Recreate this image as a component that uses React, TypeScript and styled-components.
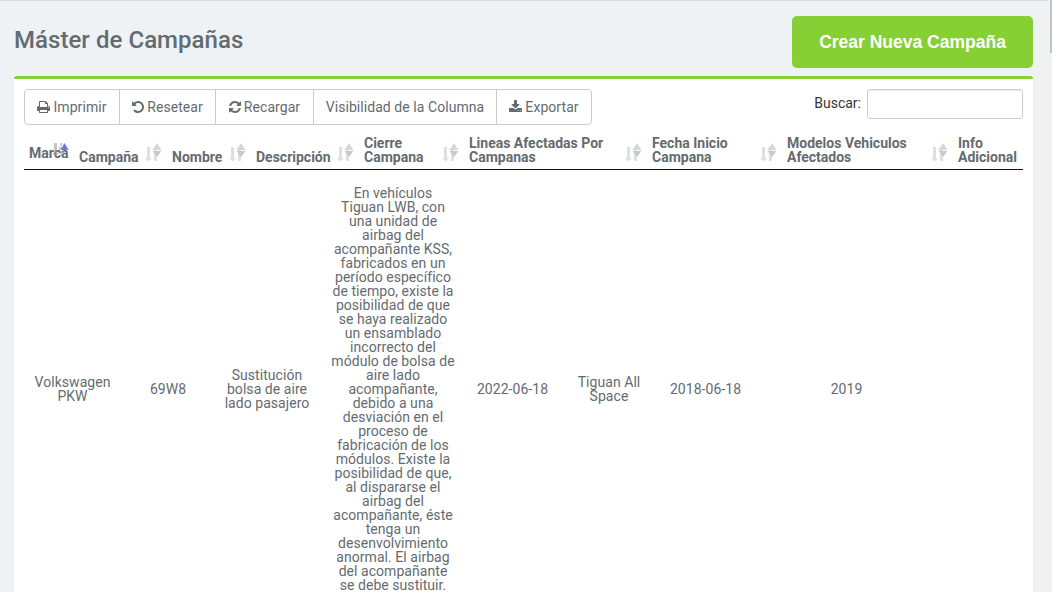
import React from 'react';
import styled, { createGlobalStyle } from 'styled-components';

const GlobalStyle = createGlobalStyle`
  * { box-sizing: border-box; }
  body {
    margin: 0;
    background: #eef2f5;
    color: #646b70;
    font: 14px/14px Roboto, sans-serif;
    letter-spacing: 0.05px;
    overflow: hidden;
  }
`;

const Page = styled.div`
  display: flex;
  height: 592px;
  overflow: hidden;
`;
const Main = styled.main`
  flex: 1;
  min-width: 0;
  padding: 15px 15px 0 14px;
  border-top: 1px solid #d5dde4;
`;
const Scrollbar = styled.div`
  width: 4px;
  padding-left: 2px;
  background: #f1f1f1;
`;
const Thumb = styled.div`
  height: 53px;
  background: #c1c1c1;
`;
const Header = styled.header`
  display: flex;
  justify-content: space-between;
  height: 60px;
`;
const Title = styled.h1`
  margin: 10px 0 0;
  font-size: 24px;
  line-height: 28px;
  font-weight: 500;
`;
const CreateButton = styled.button`
  width: 241px;
  height: 52px;
  padding: 0;
  border: 0;
  border-radius: 5px;
  background: #86d036;
  color: #fff;
  font: bold 17.5px 'Liberation Sans', Arial, sans-serif;
`;
const Panel = styled.section`
  height: 540px;
  padding: 10px;
  border-top: 3px solid #86d036;
  border-radius: 3px 3px 0 0;
  background: #fff;
  box-shadow: 0 1px 1px rgba(0, 0, 0, 0.1);
`;
const Toolbar = styled.div`
  display: flex;
  justify-content: space-between;
  align-items: flex-start;
  height: 42px;
`;
const ButtonGroup = styled.div`
  display: flex;
  height: 36px;
  border: 1px solid #ccc;
  border-radius: 4px;
`;
const ToolButton = styled.button<{ $width: number }>`
  display: flex;
  align-items: center;
  justify-content: center;
  gap: 3px;
  width: ${(p) => p.$width}px;
  padding: 0;
  border: 0;
  border-right: 1px solid #ccc;
  background: none;
  color: inherit;
  font: inherit;
  letter-spacing: 0.06px;
  white-space: nowrap;
  &:last-child { border-right: 0; }
`;
const Search = styled.label`
  display: flex;
  gap: 6px;
  color: #333;
  letter-spacing: 0;
  line-height: 28px;
`;
const SearchInput = styled.input`
  width: 156px;
  height: 30px;
  border: 1px solid #ccc;
  border-radius: 3px;
  background: #fff;
  box-shadow: inset 0 1px 1px rgba(0, 0, 0, 0.075);
`;
const HeadRow = styled.div`
  display: grid;
  grid-template-columns: 50px 93px 84px 108px 105px 183px 135px 171px 70px;
  height: 39px;
  border-bottom: 1px solid #111;
`;
const HeadCell = styled.div<{ $raised?: boolean }>`
  position: relative;
  display: flex;
  align-items: flex-end;
  padding: 0 0 ${(p) => (p.$raised ? 9 : 5)}px 5px;
  font-weight: 700;
  letter-spacing: 0;
  white-space: pre;
`;
const SortMark = styled.svg<{ $active?: boolean }>`
  position: absolute;
  top: ${(p) => (p.$active ? 11 : 12)}px;
  right: 5px;
`;
const BodyRow = styled.div`
  display: grid;
  grid-template-columns: 97px 94px 104px 148px 91px 102px 91px 191px 81px;
  align-items: center;
  padding-top: 16px;
`;
const Cell = styled.div`
  text-align: center;
  white-space: pre;
`;

const icons = {
  print: {
    w: 1664,
    d: 'M384 1536h896v-256h-896v256zM384 896h896v-384h-160q-40 0-68-28t-28-68v-160h-640v640zM1536 960q0-26-19-45t-45-19-45 19-19 45 19 45 45 19 45-19 19-45zM1664 960v416q0 13-9.5 22.5t-22.5 9.5h-224v160q0 40-28 68t-68 28h-960q-40 0-68-28t-28-68v-160h-224q-13 0-22.5-9.5t-9.5-22.5v-416q0-79 56.5-135.5t135.5-56.5h64v-544q0-40 28-68t68-28h672q40 0 88 20t76 48l152 152q28 28 48 76t20 88v256h64q79 0 135.5 56.5t56.5 135.5z',
  },
  undo: {
    w: 1536,
    d: 'M1536 896q0 156-61 298t-164 245-245 164-298 61q-172 0-327-72.5t-264-204.5q-7-10-6.5-22.5t8.5-20.5l137-138q10-9 25-9 16 2 23 12 73 95 179 147t225 52q104 0 198.5-40.5t163.5-109.5 109.5-163.5 40.5-198.5-40.5-198.5-109.5-163.5-163.5-109.5-198.5-40.5q-98 0-188 35.5t-160 101.5l137 138q31 30 14 69-17 40-59 40h-448q-26 0-45-19t-19-45v-448q0-42 40-59 39-17 69 14l130 129q107-101 244.5-156.5t284.5-55.5q156 0 298 61t245 164 164 245 61 298z',
  },
  refresh: {
    w: 1536,
    d: 'M1511 1056q0 5-1 7-64 268-268 434.5t-478 166.5q-146 0-282.5-55t-243.5-157l-129 129q-19 19-45 19t-45-19-19-45v-448q0-26 19-45t45-19h448q26 0 45 19t19 45-19 45l-137 137q71 66 161 102t187 36q134 0 250-65t186-179q11-17 53-117 8-23 30-23h192q13 0 22.5 9.5t9.5 22.5zM1536 256v448q0 26-19 45t-45 19h-448q-26 0-45-19t-19-45 19-45l138-138q-148-137-349-137-134 0-250 65t-186 179q-11 17-53 117-8 23-30 23h-199q-13 0-22.5-9.5t-9.5-22.5v-7q65-268 270-434.5t480-166.5q146 0 284 55.5t245 156.5l130-129q19-19 45-19t45 19 19 45z',
  },
  download: {
    w: 1664,
    d: 'M1280 1344q0-26-19-45t-45-19-45 19-19 45 19 45 45 19 45-19 19-45zM1536 1344q0-26-19-45t-45-19-45 19-19 45 19 45 45 19 45-19 19-45zM1664 1120v320q0 40-28 68t-68 28h-1472q-40 0-68-28t-28-68v-320q0-40 28-68t68-28h465l135 136q58 56 136 56t136-56l136-136h464q40 0 68 28t28 68zM1339 551q17 41-14 70l-448 448q-18 19-45 19t-45-19l-448-448q-31-29-14-70 17-39 59-39h256v-448q0-26 19-45t45-19h256q26 0 45 19t19 45v448h256q42 0 59 39z',
  },
};

function Icon({ name }: { name: keyof typeof icons }) {
  const { w, d } = icons[name];
  return (
    <svg width={w / 128} height={14} viewBox={`0 0 ${w} 1792`} fill="currentColor">
      <path d={d} />
    </svg>
  );
}

function SortIcon({ active }: { active?: boolean }) {
  if (active) {
    return (
      <SortMark $active width={16} height={16} viewBox="0 0 16 16">
        <path d="M1 1h3v10h2l-3.500 3.500L-1 11h2z" fill="#999da3" opacity={0.6} />
        <path d="M7 1h2v3H7zM6 5h4v3H6zM7 9h5v3H7z" fill="#999da3" opacity={0.55} />
        <path d="M11.500 1 15.500 8h-8z" fill="#7276dc" />
      </SortMark>
    );
  }
  return (
    <SortMark width={17} height={19} viewBox="0 0 17 19">
      <path d="M2 4h3v11h2l-3.500 3.500L0 15h2z" fill="#dddfe0" />
      <path d="M9 18V7H7l4-4 3 4h-2v11z" fill="#dddfe0" />
      <path d="M12 0l4.500 7H7.500z" fill="#d6d7d8" />
      <path d="M7.500 8h9L12 14z" fill="#c9cacc" />
    </SortMark>
  );
}

const columns = [
  'Marca', 'Campaña', 'Nombre', 'Descripción', 'Cierre\nCampana',
  'Lineas Afectadas Por\nCampanas', 'Fecha Inicio\nCampana',
  'Modelos Vehiculos\nAfectados', 'Info\nAdicional',
];

const description = [
  'En vehículos', 'Tiguan LWB, con', 'una unidad de', 'airbag del',
  'acompañante KSS,', 'fabricados en un', 'período específico',
  'de tiempo, existe la', 'posibilidad de que', 'se haya realizado',
  'un ensamblado', 'incorrecto del', 'módulo de bolsa de', 'aire lado',
  'acompañante,', 'debido a una', 'desviación en el', 'proceso de',
  'fabricación de los', 'módulos. Existe la', 'posibilidad de que,',
  'al dispararse el', 'airbag del', 'acompañante, éste', 'tenga un',
  'desenvolvimiento', 'anormal. El airbag', 'del acompañante', 'se debe sustituir.',
].join('\n');

const row = [
  'Volkswagen\nPKW', '69W8', 'Sustitución\nbolsa de aire\nlado pasajero',
  description, '2022-06-18', 'Tiguan All\nSpace', '2018-06-18', '2019', '',
];

export default function App() {
  return (
    <Page>
      <GlobalStyle />
      <Main>
        <Header>
          <Title>Máster de Campañas</Title>
          <CreateButton>Crear Nueva Campaña</CreateButton>
        </Header>
        <Panel>
          <Toolbar>
            <ButtonGroup>
              <ToolButton $width={95}><Icon name="print" />Imprimir</ToolButton>
              <ToolButton $width={96}><Icon name="undo" />Resetear</ToolButton>
              <ToolButton $width={98}><Icon name="refresh" />Recargar</ToolButton>
              <ToolButton $width={183}>Visibilidad de la Columna</ToolButton>
              <ToolButton $width={94}><Icon name="download" />Exportar</ToolButton>
            </ButtonGroup>
            <Search>Buscar:<SearchInput /></Search>
          </Toolbar>
          <HeadRow>
            {columns.map((label, i) => (
              <HeadCell key={label} $raised={i === 0}>
                {label}
                {i < columns.length - 1 && <SortIcon active={i === 0} />}
              </HeadCell>
            ))}
          </HeadRow>
          <BodyRow>
            {row.map((text, i) => <Cell key={i}>{text}</Cell>)}
          </BodyRow>
        </Panel>
      </Main>
      <Scrollbar><Thumb /></Scrollbar>
    </Page>
  );
}
